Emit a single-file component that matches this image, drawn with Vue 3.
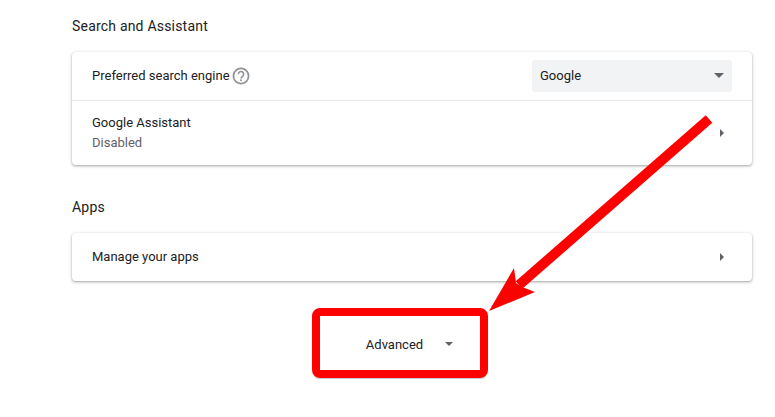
<script setup>
</script>

<template>
  <div class="page">
    <h2 class="heading first">Search and Assistant</h2>
    <section class="card">
      <div class="row engine">
        <span class="label">Preferred search engine</span>
        <svg class="help" width="18" height="18" viewBox="0 0 18 18">
          <circle cx="9" cy="9" r="7.6" fill="none" stroke="#8f9296" stroke-width="1.7" />
          <path d="M6.3 7.2a2.7 2.7 0 1 1 4.3 2.2c-.9.7-1.6 1.1-1.6 2.2" fill="none" stroke="#8f9296" stroke-width="1.6" />
          <rect x="8.1" y="12.4" width="1.7" height="1.7" fill="#8f9296" />
        </svg>
        <div class="select">
          <span>Google</span>
          <i class="caret-down"></i>
        </div>
      </div>
      <div class="row assistant">
        <div>
          <div class="label">Google Assistant</div>
          <div class="sub">Disabled</div>
        </div>
        <i class="caret-right"></i>
      </div>
    </section>

    <h2 class="heading second">Apps</h2>
    <section class="card">
      <div class="row apps">
        <span class="label">Manage your apps</span>
        <i class="caret-right"></i>
      </div>
    </section>

    <div class="advanced-wrap">
      <div class="advanced">
        <span>Advanced</span>
        <i class="caret-down small"></i>
      </div>
    </div>

    <svg class="arrow" width="775" height="417" viewBox="0 0 775 417">
      <path d="M709 119 L519 285" fill="none" stroke="#ff0000" stroke-width="10" />
      <polygon points="489,311 514,268 516,283 522,287 535,292" fill="#ff0000" />
    </svg>
  </div>
</template>

<style>
body {
  margin: 0;
  background: #fff;
}
</style>

<style scoped>
.page {
  position: relative;
  width: 775px;
  height: 417px;
  overflow: hidden;
  box-sizing: border-box;
  padding: 0 23px 0 72px;
  background: #fff;
  font-family: Roboto, "Liberation Sans", sans-serif;
  font-size: 13px;
  color: #202124;
}
.heading {
  margin: 0;
  font-size: 14px;
  font-weight: 400;
  line-height: 20px;
  letter-spacing: 0.2px;
}
.heading.first {
  padding-top: 16px;
  padding-bottom: 16px;
}
.heading.second {
  padding-top: 32px;
  padding-bottom: 16px;
}
.card {
  background: #fff;
  border-radius: 4px;
  box-shadow: 0 1px 2px rgba(60, 64, 67, 0.3), 0 1px 3px 1px rgba(60, 64, 67, 0.15);
}
.row {
  display: flex;
  align-items: center;
  box-sizing: border-box;
  padding: 0 20px;
}
.engine {
  height: 48px;
  gap: 2px;
}
.assistant {
  height: 65px;
  justify-content: space-between;
  border-top: 1px solid #e8eaed;
  padding-right: 28px;
}
.apps {
  height: 48px;
  justify-content: space-between;
  padding-right: 28px;
}
.label {
  line-height: 20px;
}
.sub {
  color: #5f6368;
  line-height: 20px;
}
.help {
  flex: none;
}
.select {
  display: flex;
  align-items: center;
  justify-content: space-between;
  box-sizing: border-box;
  width: 200px;
  height: 32px;
  margin-left: auto;
  padding: 0 8px 1px 8px;
  background: #f1f3f4;
  border-radius: 4px;
}
.caret-down {
  display: block;
  width: 0;
  height: 0;
  border-left: 5px solid transparent;
  border-right: 5px solid transparent;
  border-top: 5px solid #5f6368;
}
.caret-down.small {
  border-left-width: 4.5px;
  border-right-width: 4.5px;
  border-top-width: 4.5px;
}
.caret-right {
  display: block;
  width: 0;
  height: 0;
  border-top: 4.5px solid transparent;
  border-bottom: 4.5px solid transparent;
  border-left: 4.5px solid #5f6368;
}
.advanced-wrap {
  display: flex;
  justify-content: center;
  padding-top: 27px;
  margin-left: -72px;
  margin-right: -23px;
  padding-left: 25px;
}
.advanced {
  display: flex;
  align-items: center;
  justify-content: center;
  gap: 22px;
  box-sizing: border-box;
  width: 176px;
  height: 70px;
  padding: 2px 0 0 19px;
  border: 8px solid #ff0000;
  border-radius: 8px;
  box-shadow: 0 1px 1px rgba(60, 64, 67, 0.3);
}
.arrow {
  position: absolute;
  left: 0;
  top: 0;
  pointer-events: none;
}
</style>
